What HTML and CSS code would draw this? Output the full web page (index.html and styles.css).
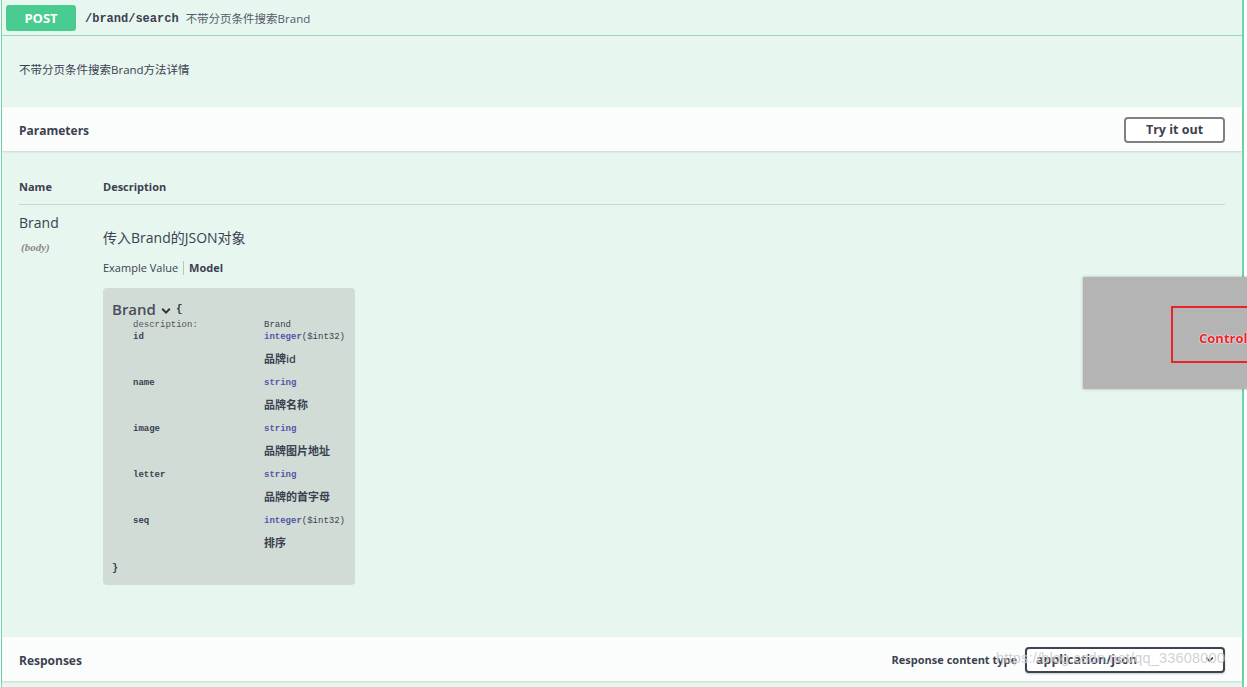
FILE: index.html
```html
<!DOCTYPE html>
<html lang="zh">
<head>
<meta charset="utf-8">
<title>Swagger - /brand/search</title>
<link rel="stylesheet" href="styles.css">
</head>
<body>
<div class="opblock">
  <div class="summary">
    <span class="method">POST</span>
    <span class="path">/brand/search</span>
    <span class="summary-text">不带分页条件搜索Brand</span>
  </div>
  <div class="description">不带分页条件搜索Brand方法详情</div>
  <div class="section-header">
    <span class="section-title">Parameters</span>
    <button class="try-btn">Try it out</button>
  </div>
  <div class="params">
    <div class="params-head">
      <div class="col-name">Name</div>
      <div class="col-desc">Description</div>
    </div>
    <div class="param-row">
      <div class="col-name">
        <div class="param-name">Brand</div>
        <div class="param-in">(body)</div>
      </div>
      <div class="col-desc">
        <p class="param-desc">传入Brand的JSON对象</p>
        <div class="tabs"><span class="tab">Example Value</span><span class="tab active">Model</span></div>
        <div class="model">
          <div class="model-title">Brand <svg class="chev" viewBox="0 0 10 8" width="10" height="8"><path d="M1.2 1.8 L5 5.6 L8.8 1.8" fill="none" stroke="#333" stroke-width="2"/></svg> <span class="brace">{</span></div>
          <div class="prop meta"><span class="key light">description:</span><span class="val light">Brand</span></div>
          <div class="prop"><span class="key">id</span><span class="val"><b class="type">integer</b>($int32)</span></div>
          <div class="pdesc">品牌id</div>
          <div class="prop"><span class="key">name</span><span class="val"><b class="type">string</b></span></div>
          <div class="pdesc">品牌名称</div>
          <div class="prop"><span class="key">image</span><span class="val"><b class="type">string</b></span></div>
          <div class="pdesc">品牌图片地址</div>
          <div class="prop"><span class="key">letter</span><span class="val"><b class="type">string</b></span></div>
          <div class="pdesc">品牌的首字母</div>
          <div class="prop"><span class="key">seq</span><span class="val"><b class="type">integer</b>($int32)</span></div>
          <div class="pdesc">排序</div>
          <div class="brace close">}</div>
        </div>
      </div>
    </div>
  </div>
  <div class="section-header responses">
    <span class="section-title">Responses</span>
    <div class="ctype">
      <span class="ctype-label">Response content type</span>
      <div class="select">application/json <svg viewBox="0 0 10 8" width="9" height="7"><path d="M1.2 1.8 L5 5.6 L8.8 1.8" fill="none" stroke="#333" stroke-width="1.8"/></svg></div>
    </div>
  </div>
</div>
<div class="overlay"><div class="control-box">Control</div></div>
<div class="watermark">https://blog.csdn.net/qq_33608000</div>
</body>
</html>
```
FILE: styles.css
```css
html, body {
  margin: 0;
  padding: 0;
  background: #ffffff;
  overflow: hidden;
  font-family: "Open Sans", "Noto Sans CJK SC", sans-serif;
  color: #3b4151;
}
.opblock {
  margin: 0 3px 0 1px;
  border-left: 1px solid #6fd6a6;
  border-right: 2px solid #6fd6a6;
  background: #e7f6ef;
  min-height: 700px;
}
.summary {
  display: flex;
  align-items: center;
  height: 35px;
  padding: 0 4px;
  border-bottom: 1px solid #8ddcb6;
}
.method {
  width: 70px;
  height: 26px;
  line-height: 26px;
  text-align: center;
  background: #49cc90;
  color: #fff;
  font-weight: 700;
  font-size: 13px;
  border-radius: 3px;
}
.path {
  margin-left: 9px;
  margin-top: 2px;
  font-family: "Liberation Mono", monospace;
  font-weight: 700;
  font-size: 12px;
  color: #3b4151;
}
.summary-text {
  margin-left: 7px;
  font-size: 11.5px;
  color: #555b68;
}
.description {
  padding: 26px 17px 29px;
  font-size: 11.5px;
  line-height: 16px;
  height: 16px;
}
.section-header {
  display: flex;
  align-items: center;
  justify-content: space-between;
  height: 44px;
  padding: 0 17px 0 17px;
  background: #fbfdfc;
  box-shadow: 0 1px 2px rgba(0,0,0,.12);
}
.section-title {
  font-weight: 700;
  font-size: 12px;
  margin-top: 2px;
}
.try-btn {
  width: 101px;
  height: 26px;
  margin-top: 1px;
  border: 2px solid #808080;
  border-radius: 4px;
  background: #fff;
  font-family: "Open Sans", sans-serif;
  font-weight: 700;
  font-size: 12.5px;
  color: #3b4151;
  padding: 0;
}
.params {
  padding: 27px 17px 52px;
}
.params-head {
  display: flex;
  height: 18px;
  line-height: 18px;
  padding-bottom: 8px;
  border-bottom: 1px solid #c9d8d0;
  font-weight: 700;
  font-size: 11px;
}
.col-name {
  width: 84px;
  flex: none;
}
.col-desc {
  flex: 1;
}
.param-row {
  display: flex;
}
.param-name {
  margin-top: 8px;
  font-size: 14px;
  line-height: 20px;
}
.param-in {
  margin-top: 8px;
  font-family: "Liberation Serif", serif;
  font-style: italic;
  font-weight: 700;
  font-size: 11px;
  line-height: 12px;
  color: #8a8a8a;
  padding-left: 2px;
}
.param-desc {
  margin: 23px 0 0;
  font-size: 14px;
  line-height: 20px;
}
.tabs {
  margin-top: 12px;
  height: 16px;
  line-height: 16px;
  font-size: 11px;
  display: flex;
}
.tab {
  padding-right: 5px;
}
.tab.active {
  font-weight: 700;
  border-left: 1px solid #b8c6bf;
  padding-left: 5px;
  height: 14px;
  line-height: 14px;
  margin-top: 1px;
}
.model {
  margin-top: 12px;
  width: 234px;
  padding: 12px 9px 10px 9px;
  background: #d1dcd6;
  border-radius: 4px;
}
.model-title {
  display: flex;
  align-items: center;
  height: 18px;
  font-size: 15px;
  font-weight: 600;
  color: #4a4f5c;
}
.chev {
  margin: 3px 0 0 5px;
}
.brace {
  font-family: "Liberation Mono", monospace;
  font-weight: 700;
  font-size: 11px;
  color: #3b4151;
  margin-left: 5px;
}
.prop {
  display: flex;
  height: 12px;
  line-height: 12px;
  font-family: "Liberation Mono", monospace;
  font-size: 9px;
  margin-top: 8px;
}
.prop.meta {
  margin-top: 1px;
}
.prop.meta + .prop {
  margin-top: 0;
}
.key {
  width: 131px;
  padding-left: 21px;
  flex: none;
  font-weight: 700;
  color: #3b4151;
}
.light {
  font-weight: 400;
  color: #606060;
}
.key.light {
  color: #555;
}
.val {
  color: #3b4151;
}
.type {
  color: #55a;
  font-weight: 700;
}
.pdesc {
  margin: 6px 0 0 152px;
  height: 20px;
  line-height: 20px;
  font-size: 11px;
  font-weight: 600;
  color: #3b4151;
}
.brace.close {
  display: block;
  margin: 10px 0 0 0;
  height: 12px;
  line-height: 12px;
  font-size: 10px;
}
.responses {
  position: relative;
}
.ctype {
  display: flex;
  align-items: center;
  margin-top: 1px;
}
.ctype-label {
  font-weight: 700;
  font-size: 11px;
  margin-right: 8px;
}
.select {
  width: 178px;
  height: 22px;
  padding: 0 9px;
  border: 2px solid #41444e;
  border-radius: 4px;
  background: #fff;
  display: flex;
  align-items: center;
  justify-content: space-between;
  font-weight: 700;
  font-size: 12.5px;
  box-shadow: 0 1px 2px rgba(0,0,0,.2);
}
.overlay {
  position: absolute;
  left: 1083px;
  top: 277px;
  width: 200px;
  height: 112px;
  background: #b4b4b4;
  box-shadow: 0 0 3px rgba(0,0,0,.25);
}
.control-box {
  position: absolute;
  left: 88px;
  top: 29px;
  width: 120px;
  height: 45px;
  padding-top: 8px;
  border: 2px solid #e8242a;
  color: #e8242a;
  font-weight: 700;
  font-size: 13px;
  line-height: 45px;
  padding-left: 26px;
  text-shadow: 0 0 2px #fff, 0 0 1px #fff;
}
.watermark {
  position: absolute;
  left: 996px;
  top: 650px;
  font-family: "Liberation Sans", sans-serif;
  font-size: 14.5px;
  letter-spacing: 0.2px;
  color: rgba(170,170,170,0.55);
  text-shadow: 0 0 1px rgba(255,255,255,.9);
  pointer-events: none;
}
```
